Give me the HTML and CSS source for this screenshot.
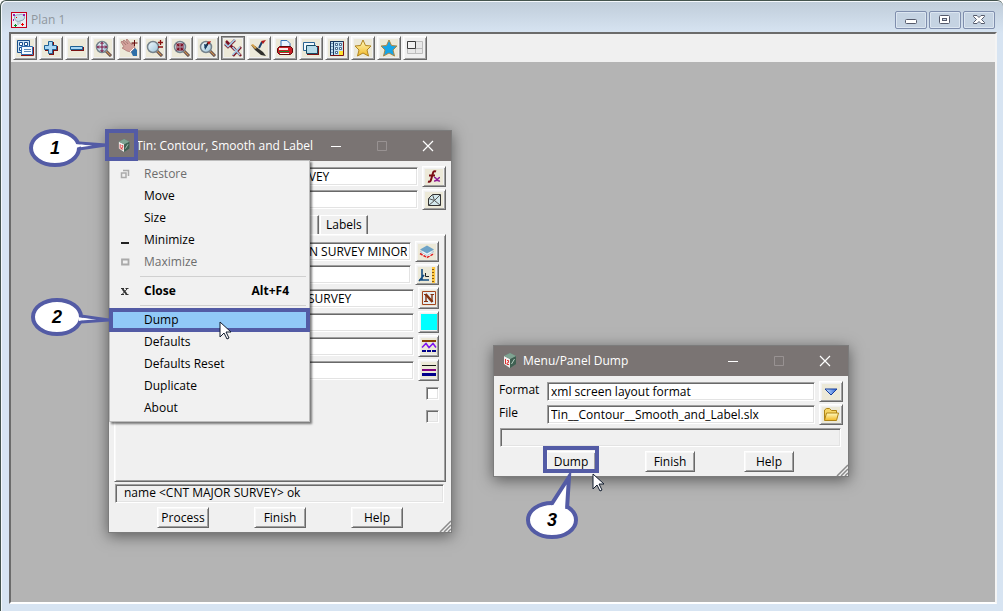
FILE: index.html
```html
<!DOCTYPE html>
<html lang="en">
<head>
<meta charset="utf-8">
<title>Plan 1</title>
<link rel="stylesheet" href="styles.css">
</head>
<body>
<svg class="defs" aria-hidden="true">
  <defs>
    <linearGradient id="glass" x1="0" y1="0" x2="1" y2="1"><stop offset="0" stop-color="#f4fbfe"/><stop offset="1" stop-color="#9cc3da"/></linearGradient>
    <linearGradient id="gold" x1="0" y1="0" x2="0" y2="1"><stop offset="0" stop-color="#fffbc0"/><stop offset="1" stop-color="#f2b824"/></linearGradient>
    <linearGradient id="tri" x1="0" y1="0" x2="1" y2="0"><stop offset="0" stop-color="#d5ecff"/><stop offset="1" stop-color="#2a62d8"/></linearGradient>
    <g id="lens"><path d="M11 11l5 5" stroke="#4a3a4a" stroke-width="3"/><path d="M11 11l4.500 4.500" stroke="#c98f4c" stroke-width="1.200"/><circle cx="7" cy="7" r="5.500" fill="url(#glass)" stroke="#76838c" stroke-width="1.500"/></g>
    <g id="cube"><path d="M7 0l6 3v8l-6 4-6-4V3z" fill="#5d8271"/><path d="M1 3l6 3v9l-6-4z" fill="#f3eeee"/><path d="M7 6l6-3v8l-6 4z" fill="#3f5f51"/><path d="M7 0l6 3-6 3-6-3z" fill="#7fa392"/><path d="M2.500 6v5M4 7.500h1.500v2L4 10v1.500h2" stroke="#d33" fill="none"/><path d="M8.500 11l3-5" stroke="#b5d0c2"/></g>
    <path id="pointer" d="M1 1v15l4-4 3 6 2-1-3-6h5z" fill="#fff" stroke="#111c2e"/>
    <g id="grip" stroke="#8a8a8a" stroke-width="1.500"><path d="M1 12L12 1M5 12l7-7M9 12l3-3"/></g>
  </defs>
</svg>

<main class="plan">
  <header class="plan-title">
    <svg class="plan-logo" viewBox="0 0 16 16" width="16" height="16"><rect x=".5" y=".5" width="15" height="15" fill="#e9eef2" stroke="#c4001c"/><path d="M4 7c-2-3 2-5 4-4 3-2 7 1 5 4-1 2-3 1-4 2-2 1-5 0-5-2z" fill="#cfe3ec" stroke="#8fa9b8"/><path d="M7 9v4M9 9v3" stroke="#9fb4bf"/><g fill="#9a1bb0"><path d="M2 2h2v2H2zM2 7h1v2H2zM12 2h2v2h-2z"/></g><g fill="#0b8a2a"><path d="M3 13h3v1H3zM4 12h1v3H4z"/></g><g fill="#e00"><path d="M10 12h3v1h-3zM11 11h1v3h-1zM5 5h1v1H5z"/></g></svg>
    <h1>Plan 1</h1>
    <div class="caption-buttons">
      <button aria-label="Minimize"><svg viewBox="0 0 12 12" width="12" height="12"><rect x=".5" y="5.500" width="11" height="4" rx="1" fill="#fff" stroke="#555a6b"/></svg></button>
      <button aria-label="Restore"><svg viewBox="0 0 12 12" width="12" height="12"><rect x=".5" y="1.500" width="10" height="8" rx="1" fill="#fff" stroke="#555a6b"/><rect x="3.500" y="4.500" width="4" height="2" fill="#cad6e6" stroke="#555a6b"/></svg></button>
      <button aria-label="Close"><svg viewBox="0 0 12 12" width="12" height="12"><path d="M.5 1.500H4l2 2 2-2h3.500v1L8.500 5.500l3 3v1H8l-2-2-2 2H.5v-1l3-3-3-3z" fill="#fff" stroke="#555a6b"/></svg></button>
    </div>
  </header>

  <section class="view">
    <nav class="toolbar" aria-label="View tools">
      <button class="tool" aria-label="Menu"><svg viewBox="0 0 18 18"><path d="M1.500 1.500h12v12h-12z" fill="#cde4f7" stroke="#1b4f8c"/><path d="M3.500 3.500h3v3h-3zM8.500 3.500h3v3h-3zM3.500 8.500h2v3h-2z" fill="#fff" stroke="#1b4f8c"/><path d="M5.500 7.500h11v8h-11z" fill="#f4faff" stroke="#2f6db0"/><path d="M5 16.500h12.500V8" stroke="#8a1010" fill="none"/><path d="M8 10.500h7M8 12.500h7" stroke="#5b89b8"/></svg></button>
      <button class="tool" aria-label="Add"><svg viewBox="0 0 18 18"><path d="M7 3h5v4h4v5h-4v4H7v-4H3V7h4z" fill="#7b1212"/><path d="M6.500 2.500h4v4h4v4h-4v4h-4v-4h-4v-4h4z" fill="#a9d8f5" stroke="#1f6194"/></svg></button>
      <button class="tool" aria-label="Remove"><svg viewBox="0 0 18 18"><path d="M3 8h13v4H3z" fill="#7b1212"/><path d="M2.500 7.500h12v3h-12z" fill="#a9d8f5" stroke="#1f6194"/></svg></button>
      <button class="tool" aria-label="Zoom extents"><svg viewBox="0 0 18 18"><use href="#lens" x="1" y="1"/><path d="M8 3v10M3 8h10M6.500 5L8 3.500 9.500 5M6.500 11L8 12.500 9.500 11M5 6.500L3.500 8 5 9.500M11 6.500L12.500 8 11 9.500" stroke="#7a0c3a" fill="none"/></svg></button>
      <button class="tool" aria-label="Pan"><svg viewBox="0 0 18 18"><path d="M1 3l1-1 4 4-3-4 1-1 4 4-2-4 1-1 5 6v-2h2l1 6-4 3-4-1-5-3 2-1z" fill="#d3a29b" stroke="#a8736e" stroke-width=".7"/><path d="M11 13l4-4 2 2v6h-4z" fill="#2e6fa8"/><path d="M10 13l4-4" stroke="#fff"/><path d="M14.500 1v6M11.500 4h6" stroke="#6b0f0f"/></svg></button>
      <button class="tool" aria-label="Zoom in or out"><svg viewBox="0 0 18 18"><use href="#lens" x="0" y="1"/><path d="M14.500 1v5M12 3.500h5M12 8h5" stroke="#8a1010" stroke-width="1.300"/></svg></button>
      <button class="tool" aria-label="Zoom window"><svg viewBox="0 0 18 18"><use href="#lens" x="1" y="1"/><path d="M4.500 4.500l3 3M7 4v3H4M11.500 4.500l-3 3M9 4v3h3M4.500 11.500l3-3M7 12V9H4M11.500 11.500l-3-3M9 12V9h3" stroke="#7b0d20" stroke-width="1.200" fill="none"/></svg></button>
      <button class="tool" aria-label="Zoom previous"><svg viewBox="0 0 18 18"><use href="#lens" x="1" y="1"/><path d="M10 4L7 9" stroke="#222" stroke-width="1.500"/><path d="M9 3l4-1-2 4z" fill="#b01818"/><path d="M6 5l4 1-3 5z" fill="#163d64"/></svg></button>
      <button class="tool pressed" aria-label="Snap toggle"><svg viewBox="0 0 18 18"><path d="M1 5l3 3 7-7M9 8l8 9M17 8l-8 9M2 2l9 9" stroke="#7b1225" stroke-width="2.500" fill="none"/><path d="M1 4.500l3 3 7-7M8.500 8l7.500 8M16 8l-7.500 8" stroke="#a3cbe8" stroke-width="1.700" fill="none"/></svg></button>
      <button class="tool" aria-label="Redraw"><svg viewBox="0 0 18 18"><path d="M1 6l4 1 8 6 3 4-5-1-6-5z" fill="#30302c"/><path d="M1 6l2-1 4 4-2 1z" fill="#d5a24c"/><path d="M9 9l3-6" stroke="#1a3f6b" stroke-width="2"/><path d="M11 2l5-1-3 4z" fill="#b01818"/></svg></button>
      <button class="tool" aria-label="Print"><svg viewBox="0 0 18 18"><path d="M5 8V1.500h6l3 3V8z" fill="#eaf5ff" stroke="#3571b5"/><path d="M1.500 9.500l2-2h11l2 2v4l-2 2h-11l-2-2z" fill="#c81f27" stroke="#5b0b0b"/><path d="M3 9h9v2H3z" fill="#fbe9e9"/><path d="M3 12.500h10" stroke="#1c8a2a"/><path d="M4 14.500h9" stroke="#fff"/></svg></button>
      <button class="tool" aria-label="Views"><svg viewBox="0 0 18 18"><path d="M1.500 3.500h11v8h-11z" fill="#f2f9fd" stroke="#2a6494"/><path d="M5 7h12v9H5z" fill="#7b1212"/><path d="M4.500 6.500h9l2 2v6h-11z" fill="#b7dcea" stroke="#164c64"/></svg></button>
      <button class="tool" aria-label="Plot sheet"><svg viewBox="0 0 18 18"><path d="M2.500 2.500h13v14h-13z" fill="#c4e1f2" stroke="#7b1212"/><path d="M2.500 16.500v-14h13" stroke="#16365c" fill="none"/><path d="M5.500 3v13" stroke="#16365c"/><path d="M7.500 4.500h2v2h-2zM11.500 4.500h2v2h-2zM7.500 8.500h2v2h-2zM11.500 8.500h2v2h-2zM7.500 12.500h2v2h-2z" fill="#fff" stroke="#274d74" stroke-width=".8"/><path d="M11 12h4v4h-4z" fill="#ffe32e"/><path d="M4 4v12" stroke="#274d74" stroke-dasharray="1 2"/></svg></button>
      <button class="tool" aria-label="Favourites"><svg viewBox="0 0 18 18"><path d="M9 1l2.500 5.500 5.500.5-4 4 1.500 6L9 14l-5.500 3L5 11 1 7l5.500-.5z" fill="url(#gold)" stroke="#b08420"/></svg></button>
      <button class="tool" aria-label="User favourites"><svg viewBox="0 0 18 18"><path d="M9 1l2.500 5.500 5.500.5-4 4 1.500 6L9 14l-5.500 3L5 11 1 7l5.500-.5z" fill="#15a5e8" stroke="#a98746"/></svg></button>
      <button class="tool plain" aria-label="Tile views"><svg viewBox="0 0 18 18"><path d="M1.500 2.500h15v12h-15zM9.500 2.500v12M1.500 9.500h15" fill="#e8e8e8" stroke="#bdbdbd"/><path d="M1.500 2.500h8v7h-8z" fill="#f1f1f1" stroke="#3c3c3c"/></svg></button>
    </nav>
  </section>
</main>

<section class="window tin" aria-label="Tin: Contour, Smooth and Label">
  <header class="titlebar">
    <svg viewBox="0 0 14 16" width="14" height="16"><use href="#cube"/></svg>
    <h2>Tin: Contour, Smooth and Label</h2>
    <div class="win-buttons">
      <button aria-label="Minimize"><svg viewBox="0 0 12 12"><path d="M1 6.500h10" stroke="#fff"/></svg></button>
      <button aria-label="Maximize" disabled><svg viewBox="0 0 12 12"><path d="M1.500 1.500h9v9h-9z" stroke="#989292" fill="none"/></svg></button>
      <button aria-label="Close"><svg viewBox="0 0 12 12"><path d="M1 1l10 10M11 1L1 11" stroke="#fff" stroke-width="1.200"/></svg></button>
    </div>
  </header>
  <form class="tin-form">
    <div class="row">
      <input class="field" type="text" aria-label="Function name" value="SURVEY">
      <button type="button" class="pick" aria-label="Function"><svg viewBox="0 0 18 16"><path d="M11 2.500c-3-1.500-3 2-4 5s-1 6-4 5M4 6.500h6" stroke="#7b0d14" stroke-width="2" fill="none"/><path d="M9 8.500c3-1 2 4.500 6 3.500M15 8.500c-2.500 0-2 4-6 3.500" stroke="#8d1a94" stroke-width="1.500" fill="none"/></svg></button>
    </div>
    <div class="row">
      <input class="field" type="text" aria-label="Tin">
      <button type="button" class="pick" aria-label="Choose tin"><svg viewBox="0 0 18 16"><path d="M3.500 13.500v-7l4-4h8v11z" fill="#d3e8ec" stroke="#333"/><path d="M3.500 13.500l6-5 6 5M9.500 8.500l-2-6M9.500 8.500l6-6M9.500 8.500l-6-2" stroke="#555" fill="none"/></svg></button>
    </div>
    <div class="tabs" role="tablist">
      <button type="button" role="tab" class="tab current" aria-selected="true">Name</button>
      <button type="button" role="tab" class="tab">Labels</button>
    </div>
    <div class="panel">
      <div class="row">
        <input class="field wide" type="text" aria-label="Minor name" value="TIN SURVEY MINOR">
        <button type="button" class="pick" aria-label="Model"><svg viewBox="0 0 18 16"><path d="M2 9.500l7 4 7-4" fill="#fff" stroke="#d22" stroke-width="1.500" stroke-dasharray="3 1"/><path d="M2 7.500l7 4 7-4-7-2z" fill="#eef7fb" stroke="#b4c9d4"/><path d="M2 5.500l7-4 7 4-7 4z" fill="#6ea3c7"/></svg></button>
      </div>
      <div class="row">
        <input class="field wide" type="text" aria-label="Interval">
        <button type="button" class="pick" aria-label="Measure"><svg viewBox="0 0 18 16"><path d="M4 2v11M1 13h10M1 14l5-6" stroke="#154d82" stroke-width="1.600" fill="none"/><path d="M7.500 6v3.500H11" stroke="#222" fill="none"/><path d="M14 0h3v16h-3z" fill="#ffc943"/><path d="M14 2.500h2M14 5.500h2M14 8.500h2M14 11.500h2M14 14.500h2" stroke="#8a5b0b"/></svg></button>
      </div>
      <div class="row major">
        <input class="field" type="text" aria-label="Major name" value="SURVEY">
        <button type="button" class="pick tall" aria-label="Name"><svg viewBox="0 0 16 16"><path d="M1.500 1.500h13v13h-13z" fill="#e5eff2" stroke="#a3461f"/><path d="M5 12V4M11 12V4" stroke="#83320f" stroke-width="1.400"/><path d="M4.500 4l7 8" stroke="#83320f" stroke-width="2.500"/><path d="M3 4.500h3M9.500 4.500h3.500M3 11.500h4" stroke="#83320f"/></svg></button>
      </div>
      <div class="row major">
        <input class="field" type="text" aria-label="Colour">
        <button type="button" class="pick tall" aria-label="Colour picker"><svg viewBox="0 0 16 16"><path d="M0 0h16v16H0z" fill="#0ff"/></svg></button>
      </div>
      <div class="row major">
        <input class="field" type="text" aria-label="Line style">
        <button type="button" class="pick tall" aria-label="Choose line style"><svg viewBox="0 0 16 16"><path d="M1 3h14" stroke="#874300" stroke-width="2"/><path d="M1 9.500l4-4 3 4 4-4 3 4" stroke="#7d13ee" stroke-width="1.500" fill="none"/><path d="M1 13h14" stroke="#00008b" stroke-width="2" stroke-dasharray="4 1"/></svg></button>
      </div>
      <div class="row major">
        <input class="field" type="text" aria-label="Weight">
        <button type="button" class="pick tall" aria-label="Choose weight"><svg viewBox="0 0 16 16"><path d="M1 3.500h14" stroke="#111"/><path d="M1 8h14" stroke="#800080" stroke-width="2"/><path d="M1 12.500h14" stroke="#00008b" stroke-width="3"/></svg></button>
      </div>
      <div class="checks">
        <input type="checkbox" aria-label="Smooth">
        <input type="checkbox" aria-label="Weed" disabled>
      </div>
    </div>
    <output class="status">name &lt;CNT MAJOR SURVEY&gt; ok</output>
    <div class="actions">
      <button type="button">Process</button>
      <button type="button">Finish</button>
      <button type="button">Help</button>
    </div>
  </form>
  <svg class="grip" viewBox="0 0 12 12"><use href="#grip"/></svg>
</section>

<div class="menu" role="menu">
  <button role="menuitem" disabled><svg viewBox="0 0 10 10"><path d="M3 1.500h5.500V7M1.500 4h4.500v4.500H1.500z" fill="none" stroke="#aaa" stroke-width="1.500"/></svg><span>Restore</span></button>
  <button role="menuitem"><i></i><span>Move</span></button>
  <button role="menuitem"><i></i><span>Size</span></button>
  <button role="menuitem"><svg viewBox="0 0 10 10"><path d="M1 8h8" stroke="#222" stroke-width="2"/></svg><span>Minimize</span></button>
  <button role="menuitem" disabled><svg viewBox="0 0 10 10"><path d="M2 2.500h6.500v5H2z" fill="none" stroke="#aaa" stroke-width="1.800"/></svg><span>Maximize</span></button>
  <hr>
  <button role="menuitem" class="strong"><svg viewBox="0 0 10 10"><path d="M2.500 3l4 5" stroke="#333" stroke-width="2"/><path d="M7 3L2.500 8M1 2.500h3M5.500 2.500h3M1 8.500h3M5.500 8.500h3" stroke="#333"/></svg><span>Close</span><kbd>Alt+F4</kbd></button>
  <hr>
  <button role="menuitem" class="active"><i></i><span>Dump</span></button>
  <button role="menuitem"><i></i><span>Defaults</span></button>
  <button role="menuitem"><i></i><span>Defaults Reset</span></button>
  <button role="menuitem"><i></i><span>Duplicate</span></button>
  <button role="menuitem"><i></i><span>About</span></button>
</div>

<section class="window dump" aria-label="Menu/Panel Dump">
  <header class="titlebar">
    <svg viewBox="0 0 14 16" width="14" height="16"><use href="#cube"/></svg>
    <h2>Menu/Panel Dump</h2>
    <div class="win-buttons">
      <button aria-label="Minimize"><svg viewBox="0 0 12 12"><path d="M1 6.500h10" stroke="#fff"/></svg></button>
      <button aria-label="Maximize" disabled><svg viewBox="0 0 12 12"><path d="M1.500 1.500h9v9h-9z" stroke="#989292" fill="none"/></svg></button>
      <button aria-label="Close"><svg viewBox="0 0 12 12"><path d="M1 1l10 10M11 1L1 11" stroke="#fff" stroke-width="1.200"/></svg></button>
    </div>
  </header>
  <form class="dump-form">
    <div class="row">
      <label for="format">Format</label>
      <input class="field" id="format" type="text" value="xml screen layout format">
      <button type="button" class="pick" aria-label="Choose format"><svg viewBox="0 0 18 16"><path d="M3 5h12l-6 6z" fill="url(#tri)" stroke="#173d9c"/></svg></button>
    </div>
    <div class="row">
      <label for="file">File</label>
      <input class="field" id="file" type="text" value="Tin__Contour__Smooth_and_Label.slx">
      <button type="button" class="pick" aria-label="Browse"><svg viewBox="0 0 18 16"><path d="M2.500 13V3l2-1.500h3l2 2h5V6" fill="#f6d565" stroke="#b08414"/><path d="M2.500 13.500l2-7.500h12l-2 7.500z" fill="url(#gold)" stroke="#b08414"/></svg></button>
    </div>
    <output class="status"></output>
    <div class="actions">
      <button type="button">Dump</button>
      <button type="button">Finish</button>
      <button type="button">Help</button>
    </div>
  </form>
  <svg class="grip" viewBox="0 0 12 12"><use href="#grip"/></svg>
</section>

<div class="mark mark-icon"></div>
<div class="mark mark-item"></div>
<div class="mark mark-button"></div>

<svg class="callout one" viewBox="0 0 80 40" width="80" height="40"><path d="M50 15L77 17 50 21" fill="#fff" stroke="#535ba5" stroke-width="3"/><ellipse cx="26" cy="20" rx="24" ry="17" fill="#fff" stroke="#535ba5" stroke-width="4"/><path d="M46 16l10 1-9 3z" fill="#fff"/><text x="26" y="26">1</text></svg>
<svg class="callout two" viewBox="0 0 80 40" width="80" height="40"><path d="M50 19L78 23 50 25" fill="#fff" stroke="#535ba5" stroke-width="3"/><ellipse cx="26" cy="20" rx="24" ry="17" fill="#fff" stroke="#535ba5" stroke-width="4"/><path d="M47 20l10 2-9 2z" fill="#fff"/><text x="26" y="26">2</text></svg>
<svg class="callout three" viewBox="0 0 54 72" width="54" height="72"><ellipse cx="26" cy="51" rx="24" ry="17" fill="#fff" stroke="#535ba5" stroke-width="4"/><path d="M25 36L43 8 41 40" fill="#fff" stroke="#535ba5" stroke-width="4"/><path d="M26 36l13 2 1 6-16-4z" fill="#fff"/><text x="26" y="57">3</text></svg>
<svg class="cursor over-item" viewBox="0 0 14 20" width="14" height="20"><use href="#pointer"/></svg>
<svg class="cursor over-button" viewBox="0 0 14 20" width="14" height="20"><use href="#pointer"/></svg>
</body>
</html>
```
FILE: styles.css
```css
* { box-sizing: border-box; }
html, body { height: 100%; }
body {
  margin: 0;
  overflow: hidden;
  background: #fff;
  color: #000;
  font: 12px/16px "Open Sans", "Noto Sans", sans-serif;
}
button, input { font: inherit; color: inherit; border-radius: 0; margin: 0; }
button { padding: 0; }
h1, h2 { margin: 0; font-size: 12px; font-weight: 400; }
.defs { position: absolute; width: 0; height: 0; }

/* Outer window */
.plan {
  display: flex;
  flex-direction: column;
  height: 100%;
  padding: 2px 6px 7px 8px;
  border-top: 1px solid #44544e;
  border-left: 1px solid #44544e;
  border-radius: 6px 6px 0 0;
  background: linear-gradient(#bfccd9, #d7e4f2 32px);
  box-shadow: inset 1px 1px #f4f8fc;
}
.plan-title { display: flex; align-items: center; height: 29px; padding: 5px 2px 0; }
.plan-title h1 { margin-left: 4px; color: #8f979e; }
.plan-logo { display: block; }
.caption-buttons { display: flex; gap: 2px; margin-left: auto; }
.caption-buttons button {
  display: grid;
  place-items: center;
  width: 32px;
  height: 18px;
  border: 1px solid #7f8ead;
  border-radius: 2px;
  background: #c5d3e2;
  box-shadow: inset 0 0 0 1px #dce6f1;
}
.view {
  flex: 1;
  border: 2px solid;
  border-color: #6b6b6b #f4f4f4 #fff #6b6b6b;
  background: #b4b4b4;
}
.toolbar { display: flex; gap: 2px; height: 28px; padding: 2px; background: #f0f0f0; }

/* Raised controls */
.tool, .pick, .actions button, .tab, .panel {
  border: 1px solid;
  border-color: #fff #696969 #696969 #fff;
  background: #f0f0f0;
  box-shadow: inset 1px 1px #f8f8f8, inset -1px -1px #a0a0a0;
}
.tool, .pick, .actions button { display: grid; place-items: center; }
.tool { width: 24px; height: 24px; }
.tool svg { width: 18px; height: 18px; background: #ece9d8; }
.tool.plain svg { background: none; }
.tool.pressed { border-color: #696969; box-shadow: inset 0 0 0 1px #a0a0a0; }
.pick { flex: none; width: 24px; height: 21px; }
.pick svg { width: 18px; height: 16px; background: #ece9d8; }
.tall { width: 21px; height: 22px; }
.tall svg { width: 16px; height: 16px; }

/* Sunken controls */
.field, .status, .checks input {
  border: 1px solid;
  border-color: #a0a0a0 #fff #fff #a0a0a0;
  box-shadow: inset 1px 1px #696969, inset -1px -1px #e3e3e3;
}
.field { flex: none; height: 19px; padding: 0 3px; background: #fff; outline: 0; }
.row { display: flex; justify-content: flex-end; align-items: center; gap: 4px; }

/* Dialog windows */
.window {
  position: absolute;
  display: flex;
  flex-direction: column;
  border: 1px solid #7c7c7c;
  background: #f0f0f0;
  box-shadow: 0 3px 14px rgba(0, 0, 0, .5);
}
.tin { left: 108px; top: 130px; width: 344px; }
.dump { left: 493px; top: 345px; width: 356px; }
.titlebar { display: flex; align-items: center; height: 30px; padding-left: 9px; background: #7a7473; color: #fff; }
.titlebar h2 { margin-left: 6px; white-space: nowrap; }
.win-buttons { display: flex; margin-left: auto; }
.win-buttons button { display: grid; place-items: center; width: 46px; height: 30px; border: 0; background: none; }
.win-buttons svg { width: 12px; height: 12px; }
.grip { position: absolute; right: 0; bottom: 0; width: 12px; height: 12px; }

.tin-form { padding: 5px 5px 4px; }
.tin-form > .row { margin-bottom: 2px; }
.tin-form > .row .field { width: 136px; }
.tabs { display: flex; gap: 1px; margin-top: 5px; padding-left: 150px; }
.tab { height: 19px; padding: 0 5px; border-bottom: 0; box-shadow: inset -1px 0 #a0a0a0; }
.current { width: 55px; color: #17508c; }
.panel { height: 248px; padding: 6px; }
.panel .row { margin-bottom: 2px; }
.panel .field { width: 110px; }
.panel .wide { width: 116px; }
.checks { display: flex; flex-direction: column; align-items: flex-end; gap: 10px; padding: 4px 0; }
.checks input { appearance: none; width: 13px; height: 13px; margin: 0; background: #fff; }
.checks input:disabled { background: #f0f0f0; }
.status { display: block; height: 19px; margin: 2px 2px 4px 1px; padding-left: 8px; }
.actions { display: flex; justify-content: space-between; padding: 0 43px; }
.actions button { width: 52px; height: 21px; }

.dump-form { padding: 5px 5px 4px; }
.dump-form .row { margin-bottom: 2px; }
.dump-form label { flex: none; width: 44px; padding-bottom: 4px; }
.dump-form .field { flex: 1; }
.dump-form .status { margin: 3px 2px 4px 1px; }
.dump-form .actions { padding: 0 49px 0 47px; }
.dump-form .actions button { width: 50px; }

/* System menu */
.menu {
  position: absolute;
  left: 109px;
  top: 160px;
  width: 201px;
  padding: 2px;
  border: 1px solid #bdbdbd;
  background: #f1f1f1;
  box-shadow: 2px 2px 2px rgba(0, 0, 0, .5);
}
.menu button { display: flex; align-items: center; width: 100%; height: 22px; padding: 0 18px 0 8px; border: 0; background: none; text-align: left; }
.menu svg, .menu i { flex: none; width: 10px; height: 10px; margin-right: 14px; }
.menu button:disabled { color: #6d6d6d; }
.menu .strong { font-weight: 700; }
.menu kbd { margin-left: auto; font: inherit; }
.menu .active { background: #91c9f7; }
.menu hr { height: 1px; margin: 3px 1px 3px 28px; border: 0; background: #d0d0d0; }

/* Annotations */
.mark { position: absolute; border: 4px solid #535ba5; }
.mark-icon { left: 105px; top: 129px; width: 33px; height: 32px; }
.mark-item { left: 109px; top: 308px; width: 201px; height: 24px; }
.mark-button { left: 543px; top: 446px; width: 56px; height: 27px; }
.callout { position: absolute; }
.callout text { font: italic 700 18px "Liberation Sans", sans-serif; text-anchor: middle; }
.one { left: 29px; top: 128px; }
.two { left: 31px; top: 297px; }
.three { left: 526px; top: 469px; }
.cursor { position: absolute; }
.over-item { left: 219px; top: 321px; }
.over-button { left: 592px; top: 473px; }
```
